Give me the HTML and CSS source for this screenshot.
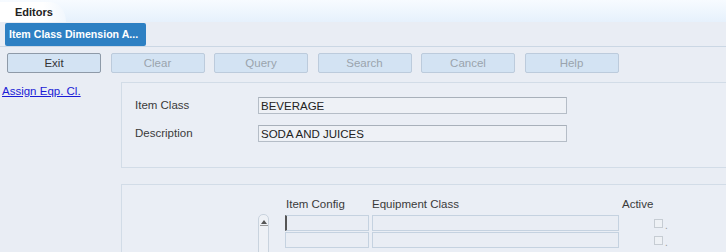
FILE: index.html
```html
<!DOCTYPE html>
<html>
<head>
<meta charset="utf-8">
<link rel="stylesheet" href="styles.css">
</head>
<body>
<div class="topbar">
  <div class="tab">Editors</div>
</div>
<div class="titlebar">
  <div class="titlebtn">Item Class Dimension A...</div>
</div>
<div class="toolbar">
  <button class="btn active">Exit</button>
  <button class="btn">Clear</button>
  <button class="btn">Query</button>
  <button class="btn">Search</button>
  <button class="btn">Cancel</button>
  <button class="btn">Help</button>
</div>
<div class="main">
  <div class="side"><a href="#" class="link">Assign Eqp. Cl.</a></div>
  <div class="content">
    <div class="panel head">
      <div class="row"><span class="lbl">Item Class</span><span class="field">BEVERAGE</span></div>
      <div class="row"><span class="lbl">Description</span><span class="field">SODA AND JUICES</span></div>
    </div>
    <div class="panel grid">
      <div class="scroll"><span class="arrow"></span></div>
      <div class="table">
        <div class="thead">
          <span class="c1">Item Config</span><span class="c2">Equipment Class</span><span class="c3">Active</span>
        </div>
        <div class="trow">
          <span class="cell c1 cursor"></span><span class="cell c2"></span><span class="chk"><span class="box"></span><span class="dot">.</span></span>
        </div>
        <div class="trow">
          <span class="cell c1"></span><span class="cell c2"></span><span class="chk"><span class="box"></span><span class="dot">.</span></span>
        </div>
      </div>
    </div>
  </div>
</div>
</body>
</html>
```
FILE: styles.css
```css
* { box-sizing: border-box; }
html, body { margin: 0; padding: 0; }
body {
  width: 726px; height: 252px; overflow: hidden;
  background: #e9edf4;
  font-family: "Liberation Sans", Arial, sans-serif;
  font-size: 11.5px; color: #3a3a3a;
}
.topbar {
  height: 22px;
  background: linear-gradient(#f7fbff, #e6f1fc);
  display: flex; align-items: flex-end;
}
.tab {
  width: 66px; height: 20px;
  background: linear-gradient(to right, #ffffff 65%, #f1f7fd);
  border-top-right-radius: 16px 20px;
  font-weight: bold; font-size: 11px; color: #222;
  padding: 4px 0 0 15px;
}
.titlebar {
  height: 25px;
  padding: 1px 0 0 5px;
  border-bottom: 1px solid #cbd7e4;
}
.titlebtn {
  width: 141px; height: 23px;
  background: #2d80c3;
  border-radius: 2px;
  color: #fff; font-weight: bold; font-size: 10.6px;
  line-height: 23px; padding-left: 4px;
  white-space: nowrap; overflow: hidden;
}
.toolbar {
  display: flex; gap: 9.5px;
  padding: 6px 0 0 7px;
  height: 35px;
}
.btn {
  width: 94px; height: 20px;
  background: #d3e3f3;
  border: 1px solid #bccbdc;
  border-radius: 2px;
  font-family: "Liberation Sans", Arial, sans-serif;
  font-size: 11.5px; color: #9aa3ad;
  padding: 0;
}
.btn.active { color: #333; border-color: #8e9aa8; }
.main { display: flex; }
.side { width: 121px; padding: 3px 0 0 2px; }
.link { color: #1b1bd6; font-size: 11.5px; }
.content { flex: 1; }
.panel {
  border: 1px solid #d2dce7;
  border-right: none;
  background: #eaeef5;
}
.head { height: 86px; padding: 8px 0 0 13px; }
.row { display: flex; align-items: center; height: 28px; }
.lbl { width: 123px; }
.field {
  width: 309px; height: 17px;
  border: 1px solid #b5bdc7;
  border-top-color: #a8b0ba;
  background: #eef1f6;
  padding: 1px 0 0 2px; color: #222;
  line-height: 14px;
}
.grid { margin-top: 16px; height: 80px; display: flex; padding: 0 0 0 136px; }
.scroll {
  width: 11px; height: 60px; margin-top: 29px;
  border: 1px solid #c9d3de; border-radius: 5px 5px 0 0;
  background: #eef1f6;
  position: relative;
}
.arrow {
  position: absolute; left: 2px; top: 5px;
  width: 0; height: 0;
  border-left: 3px solid transparent; border-right: 3px solid transparent;
  border-bottom: 4px solid #555;
}
.arrow::after {
  content: ""; position: absolute; left: -4px; top: 5px; width: 8px; height: 1px; background: #999;
}
.table { margin-left: 16px; }
.thead { display: flex; height: 30px; padding-top: 13px; }
.thead .c1 { width: 87px; padding-left: 1px; }
.thead .c2 { width: 250px; }
.trow { display: flex; height: 17px; gap: 3px; }
.cell {
  height: 16px;
  border: 1px solid #c5d2e0;
  background: #e9edf4;
}
.trow .c1 { width: 84px; }
.trow .c2 { width: 247px; }
.cursor { border-left: 2px solid #555; }
.chk { display: flex; align-items: center; padding-left: 32px; }
.box { width: 9px; height: 9px; border: 1px solid #c6ccd3; background: #eef1f5; }
.dot { color: #999; font-size: 10px; margin-left: 2px; line-height: 10px; margin-top: 4px; }
```
